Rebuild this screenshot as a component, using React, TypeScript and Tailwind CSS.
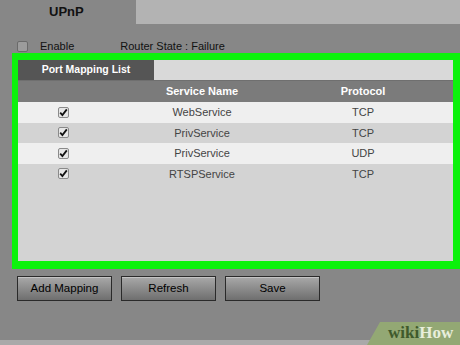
/**
 * Router UPnP settings page: port mapping list inside a highlighted box
 */
const rows = [
  { name: "WebService", protocol: "TCP" },
  { name: "PrivService", protocol: "TCP" },
  { name: "PrivService", protocol: "UDP" },
  { name: "RTSPService", protocol: "TCP" },
]

function CheckBox({ checked }: { checked: boolean }) {
  return (
    <span
      className={
        checked
          ? "flex h-[11px] w-[11px] items-center justify-center rounded-[2px] border border-[#8a8a8a] bg-[#e6e6e6]"
          : "flex h-[11px] w-[11px] items-center justify-center rounded-[2px] border border-[#6a6a6a] bg-[#9c9c9c]"
      }
    >
      {checked && (
        <svg width="9" height="9" viewBox="0 0 9 9">
          <path d="M1.2 4.6 L3.4 7 L7.8 1.4" fill="none" stroke="#111" strokeWidth="1.8" />
        </svg>
      )}
    </span>
  )
}

export default function App() {
  return (
    <main
      className="relative flex h-[345px] w-[460px] flex-col overflow-hidden bg-[#878787] text-[11px]"
      style={{ fontFamily: '"Liberation Sans", Arial, sans-serif' }}
    >
      {/* tab bar */}
      <header className="flex h-[24px]">
        <div className="flex w-[136px] items-center pl-[49px] text-[13px] font-bold text-[#111]">UPnP</div>
        <div className="flex-1 bg-[#b3b3b3]" />
      </header>

      {/* enable row */}
      <div className="flex h-[29px] items-center pt-[15px] pl-[17px] text-[#111]">
        <CheckBox checked={false} />
        <span className="ml-[12px]">Enable</span>
        <span className="ml-[46px]">Router State : Failure</span>
      </div>

      {/* highlighted port mapping panel */}
      <section className="ml-[12px] h-[216px] border-t-[7px] border-r-[7px] border-b-[8px] border-l-[6px] border-[#0cf20c] bg-[#d3d3d3]">
        <div className="flex h-[21px] border-b border-[#6f6f6f]">
          <div className="flex w-[136px] items-center justify-center bg-[#555] text-[10.5px] font-bold text-white">
            Port Mapping List
          </div>
          <div className="flex-1 bg-[#d9d9d9]" />
        </div>
        <div className="grid h-[21px] grid-cols-[90px_188px_134px_1fr] items-center bg-[#7b7b7b] font-bold text-white">
          <span />
          <span className="text-center">Service Name</span>
          <span className="text-center">Protocol</span>
          <span />
        </div>
        {rows.map((row, i) => (
          <div
            key={i}
            className={
              i % 2 === 0
                ? "grid h-[20.5px] grid-cols-[90px_188px_134px_1fr] items-center bg-[#efefef] text-[#444]"
                : "grid h-[20.5px] grid-cols-[90px_188px_134px_1fr] items-center bg-[#d3d3d3] text-[#444]"
            }
          >
            <span className="flex justify-center">
              <CheckBox checked />
            </span>
            <span className="text-center">{row.name}</span>
            <span className="text-center">{row.protocol}</span>
            <span />
          </div>
        ))}
      </section>

      {/* buttons */}
      <div className="mt-[7px] flex gap-[9px] pl-[17px]">
        {["Add Mapping", "Refresh", "Save"].map((label) => (
          <button
            key={label}
            className="h-[25px] w-[95px] border border-[#2a2a2a] bg-gradient-to-b from-[#a9a9a9] to-[#6f6f6f] text-[11.5px] text-black shadow-[inset_0_1px_0_#c4c4c4]"
          >
            {label}
          </button>
        ))}
      </div>

      <div className="mt-auto h-[5px] bg-[#a9a9a9]" />

      {/* wikiHow watermark */}
      <div className="absolute right-0 bottom-0 h-[23px] w-[93px]">
        <svg className="absolute inset-0" width="93" height="23" viewBox="0 0 93 23">
          <polygon points="0,23 13,0 93,0 93,23" fill="#93a874" />
        </svg>
        <span
          className="absolute top-[1px] left-[21px] text-[17px] leading-[20px] font-bold"
          style={{ fontFamily: '"Liberation Serif", "Times New Roman", serif' }}
        >
          <span className="text-[#3f5a2c]">wiki</span>
          <span className="text-[#e8eedc]">How</span>
        </span>
      </div>
    </main>
  )
}
